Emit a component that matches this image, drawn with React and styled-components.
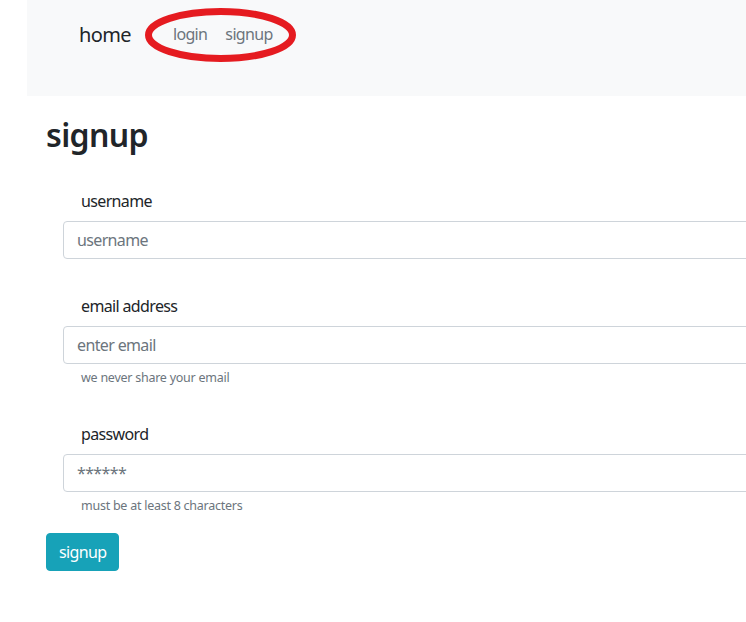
import styled, { createGlobalStyle } from 'styled-components'

const GlobalStyle = createGlobalStyle`
    body {
        margin: 0;
        font-family: "Noto Sans", "Open Sans", sans-serif;
        letter-spacing: -0.04em;
        color: #212529;
        background: #fff;
        overflow: hidden;
    }
`

export default function App() {
    return (
        <Page>
            <GlobalStyle />
            <NavBar>
                <Brand href="#">home</Brand>
                <NavLinks>
                    <NavLink href="#">login</NavLink>
                    <NavLink href="#">signup</NavLink>
                    <Circle viewBox="0 0 151 54">
                        <ellipse cx="75.5" cy="27" rx="72" ry="23.5" fill="none" stroke="#e51b20" strokeWidth="7" />
                    </Circle>
                </NavLinks>
            </NavBar>
            <Main>
                <Title>signup</Title>
                <Form onSubmit={(e) => e.preventDefault()}>
                    <Group>
                        <Label>username</Label>
                        <Input placeholder="username" />
                    </Group>
                    <Group>
                        <Label>email address</Label>
                        <Input type="email" placeholder="enter email" />
                        <Hint>we never share your email</Hint>
                    </Group>
                    <Group>
                        <Label>password</Label>
                        <Input type="password" placeholder="******" />
                        <Hint>must be at least 8 characters</Hint>
                    </Group>
                    <Button type="submit">signup</Button>
                </Form>
            </Main>
        </Page>
    )
}

const Page = styled.div`
    width: 1000px;
`

const NavBar = styled.nav`
    margin-left: 27px;
    height: 96px;
    background-color: #f8f9fa;
    display: flex;
    align-items: flex-start;
    padding: 20px 0 0 52px;
    box-sizing: border-box;
`

const Brand = styled.a`
    font-size: 20px;
    line-height: 30px;
    color: #212529;
    text-decoration: none;
    margin-right: 42px;
`

const NavLinks = styled.div`
    position: relative;
    display: flex;
    gap: 18px;
    padding-top: 2px;
`

const NavLink = styled.a`
    font-size: 16px;
    line-height: 24px;
    color: #6c757d;
    text-decoration: none;
`

const Circle = styled.svg`
    position: absolute;
    left: -28px;
    top: -12px;
    width: 151px;
    height: 54px;
    pointer-events: none;
`

const Main = styled.main`
    padding: 0 46px;
`

const Title = styled.h1`
    font-size: 32px;
    font-weight: 600;
    line-height: 38px;
    margin: 20px 0 0;
`

const Form = styled.form`
    margin-top: 35px;
    display: flex;
    flex-direction: column;
`

const Group = styled.div`
    padding-left: 17px;
    margin-bottom: 35px;
    &:last-of-type {
        margin-bottom: 18px;
    }
`

const Label = styled.label`
    display: block;
    font-size: 16px;
    line-height: 24px;
    padding-left: 18px;
    margin-bottom: 8px;
`

const Input = styled.input`
    display: block;
    width: 100%;
    box-sizing: border-box;
    height: 38px;
    padding: 6px 13px;
    font: inherit;
    font-size: 16px;
    letter-spacing: -0.04em;
    color: #495057;
    border: 1px solid #ced4da;
    border-radius: 4px;
    &::placeholder {
        color: #6c757d;
    }
`

const Hint = styled.small`
    display: block;
    font-size: 12.5px;
    line-height: 19px;
    letter-spacing: -0.02em;
    color: #6c757d;
    padding-left: 18px;
    margin-top: 4px;
`

const Button = styled.button`
    align-self: flex-start;
    height: 38px;
    padding: 0 12px;
    font: inherit;
    font-size: 16px;
    letter-spacing: -0.04em;
    color: #fff;
    background-color: #17a2b8;
    border: 1px solid #17a2b8;
    border-radius: 4px;
`
